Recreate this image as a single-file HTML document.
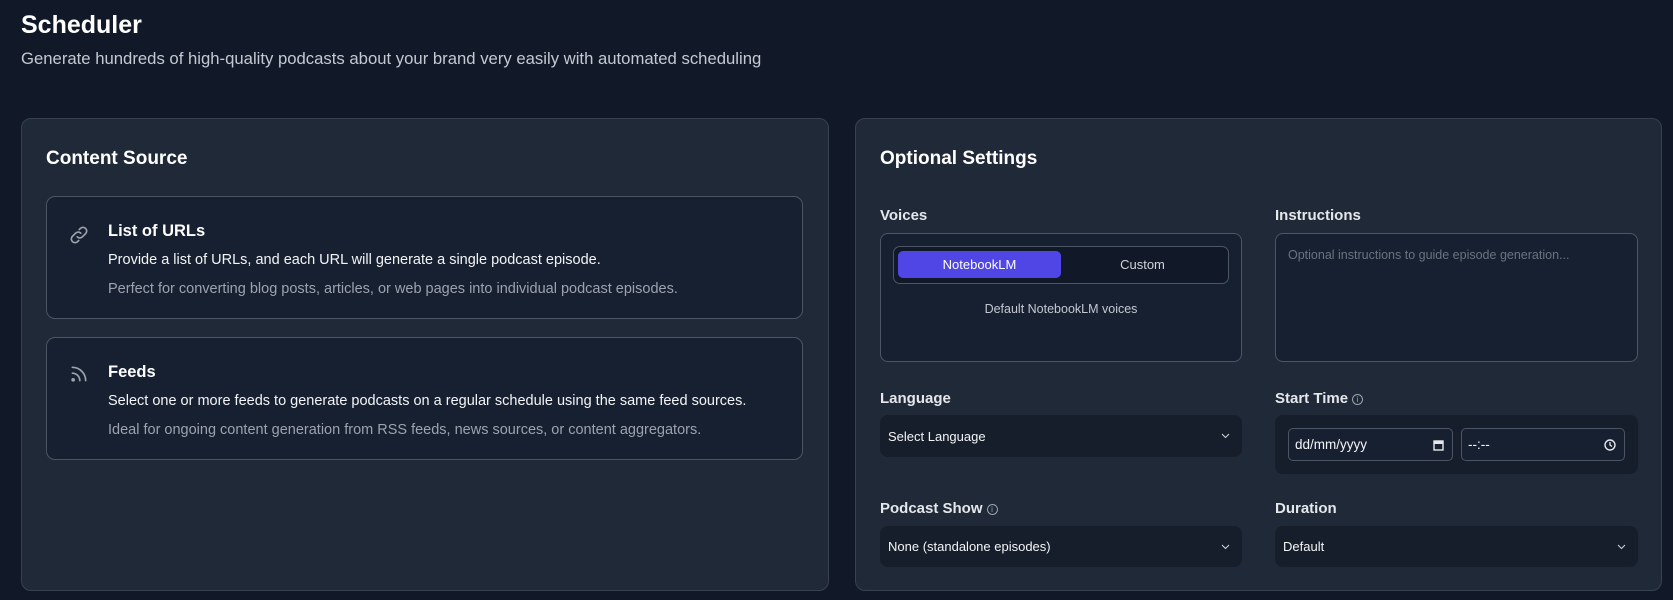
<!DOCTYPE html>
<html><head><meta charset="utf-8"><style>
*{box-sizing:border-box;margin:0;padding:0}
body{width:1673px;height:600px;background:#111827;font-family:"Liberation Sans",sans-serif;color:#f3f4f6;position:relative;overflow:hidden}
.a{position:absolute}
.card{position:absolute;background:#1f2937;border:1px solid #374151;border-radius:10px}
.item{position:absolute;background:#172030;border:1px solid #4b5563;border-radius:9px}
.lbl{position:absolute;font-size:15px;font-weight:bold;color:#e5e7eb}
.sel{position:absolute;background:#161e2b;border-radius:8px;font-size:13px;color:#f3f4f6;padding-left:8px;display:flex;align-items:center}
.chev{position:absolute;right:12px;top:50%;margin-top:-4px}
.info{display:inline-block;width:11px;height:11px;border:1px solid #9ca3af;border-radius:50%;font-size:8px;line-height:9px;text-align:center;color:#9ca3af;vertical-align:1px;margin-left:4px;font-weight:normal}
</style></head><body>
<div class="a" style="left:21px;top:11px;font-size:25px;font-weight:bold;color:#fff">Scheduler</div>
<div class="a" style="left:21px;top:49px;font-size:16.7px;color:#c4c9d2">Generate hundreds of high-quality podcasts about your brand very easily with automated scheduling</div>

<div class="card" style="left:21px;top:118px;width:808px;height:473px"></div>
<div class="a" style="left:46px;top:148px;font-size:19px;font-weight:bold;color:#fff">Content Source</div>
<div class="item" style="left:46px;top:196px;width:757px;height:123px"></div>
<svg class="a" style="left:68px;top:224px" width="22" height="22" viewBox="0 0 24 24" fill="none" stroke="#9ca3af" stroke-width="1.8" stroke-linecap="round"><path d="M10 14a4 4 0 0 0 5.7 0l3.5-3.5a4 4 0 0 0-5.7-5.7l-1.2 1.2"/><path d="M14 10a4 4 0 0 0-5.7 0l-3.5 3.5a4 4 0 0 0 5.7 5.7l1.2-1.2"/></svg>
<div class="a" style="left:108px;top:222px;font-size:16.5px;font-weight:bold;color:#fff">List of URLs</div>
<div class="a" style="left:108px;top:252px;font-size:14.5px;color:#f3f4f6">Provide a list of URLs, and each URL will generate a single podcast episode.</div>
<div class="a" style="left:108px;top:281px;font-size:14.5px;color:#9ca3af">Perfect for converting blog posts, articles, or web pages into individual podcast episodes.</div>
<div class="item" style="left:46px;top:337px;width:757px;height:123px"></div>
<svg class="a" style="left:69px;top:364px" width="20" height="20" viewBox="0 0 24 24" fill="none" stroke="#9ca3af" stroke-width="2" stroke-linecap="round"><path d="M4 11a9 9 0 0 1 9 9"/><path d="M4 4a16 16 0 0 1 16 16"/><circle cx="5" cy="19" r="1.2" fill="#9ca3af"/></svg>
<div class="a" style="left:108px;top:363px;font-size:16.5px;font-weight:bold;color:#fff">Feeds</div>
<div class="a" style="left:108px;top:393px;font-size:14.5px;color:#f3f4f6">Select one or more feeds to generate podcasts on a regular schedule using the same feed sources.</div>
<div class="a" style="left:108px;top:422px;font-size:14.5px;color:#9ca3af">Ideal for ongoing content generation from RSS feeds, news sources, or content aggregators.</div>

<div class="card" style="left:855px;top:118px;width:807px;height:473px"></div>
<div class="a" style="left:880px;top:148px;font-size:19px;font-weight:bold;color:#fff">Optional Settings</div>
<div class="lbl" style="left:880px;top:207px">Voices</div>
<div class="lbl" style="left:1275px;top:207px">Instructions</div>
<div class="a" style="left:880px;top:233px;width:362px;height:129px;background:#172030;border:1px solid #4b5563;border-radius:8px"></div>
<div class="a" style="left:893px;top:246px;width:336px;height:38px;background:#111827;border:1px solid #4b5563;border-radius:7px"></div>
<div class="a" style="left:898px;top:251px;width:163px;height:27px;background:#4f46e5;border-radius:5px;font-size:13px;color:#fff;display:flex;align-items:center;justify-content:center">NotebookLM</div>
<div class="a" style="left:1061px;top:251px;width:163px;height:27px;font-size:13px;color:#d1d5db;display:flex;align-items:center;justify-content:center">Custom</div>
<div class="a" style="left:880px;top:302px;width:362px;text-align:center;font-size:12.5px;color:#c4c9d2">Default NotebookLM voices</div>
<div class="a" style="left:1275px;top:233px;width:363px;height:129px;background:#172030;border:1px solid #4b5563;border-radius:8px;padding:14px 12px;font-size:12.5px;color:#6b7280">Optional instructions to guide episode generation...</div>

<div class="lbl" style="left:880px;top:390px">Language</div>
<div class="lbl" style="left:1275px;top:390px">Start Time<span class="info">i</span></div>
<div class="sel" style="left:880px;top:415px;width:362px;height:42px">Select Language<svg class="chev" width="9" height="7" viewBox="0 0 9 7"><path d="M1 2l3.5 3.5L8 2" fill="none" stroke="#d1d5db" stroke-width="1"/></svg></div>
<div class="a" style="left:1275px;top:415px;width:363px;height:59px;background:#161e2b;border-radius:8px"></div>
<div class="a" style="left:1288px;top:428px;width:165px;height:33px;background:#172030;border:1px solid #4b5563;border-radius:5px;font-size:13.5px;color:#f3f4f6;padding:8px 6px">dd/mm/yyyy
<svg class="a" style="right:8px;top:10px" width="11" height="12" viewBox="0 0 11 12"><rect x="1" y="2" width="9" height="9" fill="none" stroke="#e5e7eb" stroke-width="1.4"/><rect x="1" y="2" width="9" height="3" fill="#e5e7eb"/></svg></div>
<div class="a" style="left:1461px;top:428px;width:164px;height:33px;background:#172030;border:1px solid #4b5563;border-radius:5px;font-size:13.5px;color:#f3f4f6;padding:8px 6px">--:--
<svg class="a" style="right:8px;top:10px" width="12" height="12" viewBox="0 0 12 12"><circle cx="6" cy="6" r="5" fill="none" stroke="#e5e7eb" stroke-width="1.4"/><path d="M6 3v3l2 1.5" fill="none" stroke="#e5e7eb" stroke-width="1.3"/></svg></div>

<div class="lbl" style="left:880px;top:500px">Podcast Show<span class="info">i</span></div>
<div class="lbl" style="left:1275px;top:500px">Duration</div>
<div class="sel" style="left:880px;top:526px;width:362px;height:41px">None (standalone episodes)<svg class="chev" width="9" height="7" viewBox="0 0 9 7"><path d="M1 2l3.5 3.5L8 2" fill="none" stroke="#d1d5db" stroke-width="1"/></svg></div>
<div class="sel" style="left:1275px;top:526px;width:363px;height:41px">Default<svg class="chev" width="9" height="7" viewBox="0 0 9 7"><path d="M1 2l3.5 3.5L8 2" fill="none" stroke="#d1d5db" stroke-width="1"/></svg></div>
</body></html>
